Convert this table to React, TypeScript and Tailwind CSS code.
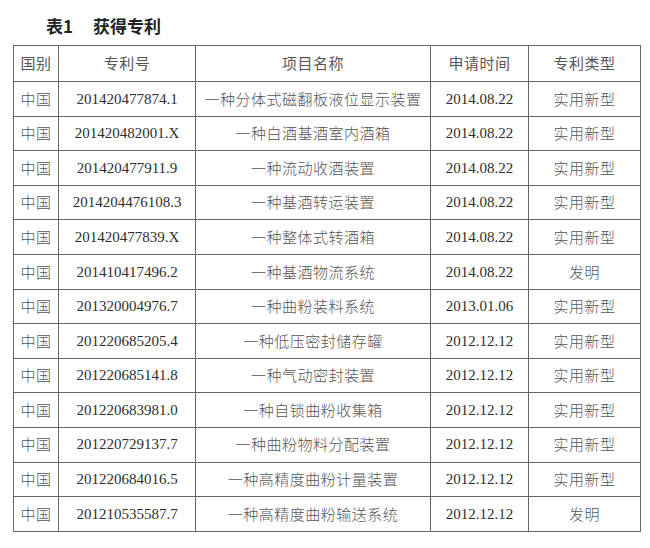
import React from 'react';

const rows: [string, string, string, string, string][] = [
  ['中国', '201420477874.1', '一种分体式磁翻板液位显示装置', '2014.08.22', '实用新型'],
  ['中国', '201420482001.X', '一种白酒基酒室内酒箱', '2014.08.22', '实用新型'],
  ['中国', '201420477911.9', '一种流动收酒装置', '2014.08.22', '实用新型'],
  ['中国', '2014204476108.3', '一种基酒转运装置', '2014.08.22', '实用新型'],
  ['中国', '201420477839.X', '一种整体式转酒箱', '2014.08.22', '实用新型'],
  ['中国', '201410417496.2', '一种基酒物流系统', '2014.08.22', '发明'],
  ['中国', '201320004976.7', '一种曲粉装料系统', '2013.01.06', '实用新型'],
  ['中国', '201220685205.4', '一种低压密封储存罐', '2012.12.12', '实用新型'],
  ['中国', '201220685141.8', '一种气动密封装置', '2012.12.12', '实用新型'],
  ['中国', '201220683981.0', '一种自锁曲粉收集箱', '2012.12.12', '实用新型'],
  ['中国', '201220729137.7', '一种曲粉物料分配装置', '2012.12.12', '实用新型'],
  ['中国', '201220684016.5', '一种高精度曲粉计量装置', '2012.12.12', '实用新型'],
  ['中国', '201210535587.7', '一种高精度曲粉输送系统', '2012.12.12', '发明'],
];

const headers = ['国别', '专利号', '项目名称', '申请时间', '专利类型'];
const widths = ['w-[45px]', 'w-[137px]', 'w-[235px]', 'w-[98px]', 'w-[112px]'];

const cn = 'font-["Noto_Sans_CJK_SC",sans-serif] font-light text-[#555] text-[15px] tracking-[0.5px]';
const num = 'font-["Liberation_Serif","Noto_Sans_CJK_SC",serif] text-[#2e2e2e] text-[15px]';

export default function App() {
  return (
    <div className="w-[650px] h-[548px] bg-white overflow-hidden">
      {/* Caption */}
      <div className="h-[45px] pl-[46px] pt-[14px] flex items-start gap-[20px] font-['Noto_Sans_CJK_SC',sans-serif] font-bold text-[17px] text-[#222] leading-[24px]">
        <span>表1</span>
        <span>获得专利</span>
      </div>

      {/* Table */}
      <table className="ml-[13px] w-[627px] border-collapse table-fixed border-[1.5px] border-[#555]">
        <thead>
          <tr className="h-[36px]">
            {headers.map((h, i) => (
              <th key={i} className={`${widths[i]} border border-[#666] font-normal text-center ${cn}`}>
                {h}
              </th>
            ))}
          </tr>
        </thead>
        <tbody>
          {rows.map((r, i) => (
            <tr key={i} className="h-[34.6px]">
              <td className={`border border-[#666] text-center ${cn}`}>{r[0]}</td>
              <td className={`border border-[#666] text-center ${num}`}>{r[1]}</td>
              <td className={`border border-[#666] text-center ${cn}`}>{r[2]}</td>
              <td className={`border border-[#666] text-center ${num}`}>{r[3]}</td>
              <td className={`border border-[#666] text-center ${cn}`}>{r[4]}</td>
            </tr>
          ))}
        </tbody>
      </table>
    </div>
  );
}
